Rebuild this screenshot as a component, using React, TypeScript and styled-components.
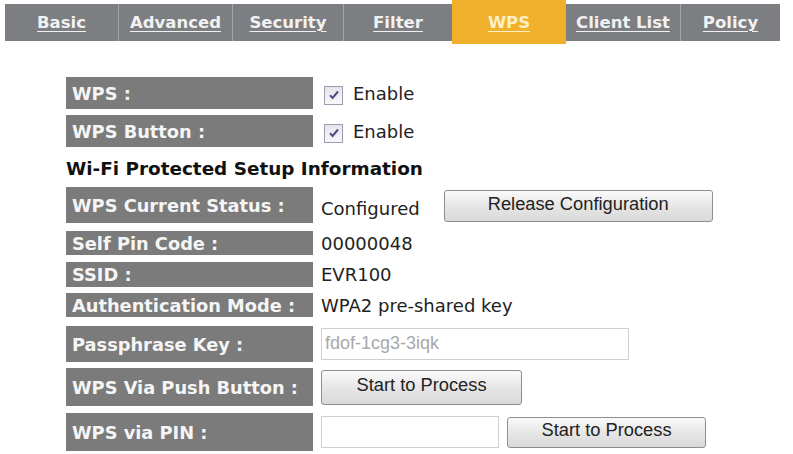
import React from "react";
import styled, { createGlobalStyle } from "styled-components";

const Global = createGlobalStyle`
  html, body { margin: 0; padding: 0; background: #ffffff; }
  body { width: 793px; height: 454px; overflow: hidden; font-family: "DejaVu Sans", Verdana, sans-serif; }
`;

const Page = styled.div`
  width: 793px;
  height: 454px;
  background: #fff;
  display: flex;
  flex-direction: column;
`;

const TabBar = styled.nav`
  margin: 4px 0 0 5px;
  width: 775px;
  height: 37px;
  background: #7c7e81;
  display: flex;
  align-items: stretch;
`;

const Tab = styled.a<{ $w: number; $active?: boolean; $first?: boolean }>`
  width: ${(p) => p.$w}px;
  flex: none;
  display: flex;
  align-items: center;
  justify-content: center;
  font-family: "DejaVu Sans", Verdana, sans-serif;
  font-weight: bold;
  font-size: 16.5px;
  color: ${(p) => (p.$active ? "#fcefc4" : "#f1f1f1")};
  text-decoration: underline;
  text-underline-offset: 3px;
  text-decoration-thickness: 1px;
  background: ${(p) => (p.$active ? "#f0b02c" : "transparent")};
  margin: ${(p) => (p.$active ? "-4px 0 -3px" : "0")};
  padding-top: ${(p) => (p.$active ? "1px" : "0")};
  border-left: ${(p) => (p.$first || p.$active ? "none" : "1px solid #a2a4a6")};
  box-sizing: border-box;
`;

const Form = styled.div`
  margin: 36px 0 0 66px;
  display: flex;
  flex-direction: column;
`;

const Row = styled.div<{ $h: number; $gap: number }>`
  display: flex;
  align-items: stretch;
  height: ${(p) => p.$h}px;
  margin-top: ${(p) => p.$gap}px;
`;

const Label = styled.div`
  width: 247px;
  flex: none;
  background: #7b7b7b;
  color: #f5f5f5;
  font-family: "DejaVu Sans", Verdana, sans-serif;
  font-weight: bold;
  font-size: 17.8px;
  display: flex;
  align-items: center;
  padding-left: 6px;
  box-sizing: border-box;
  white-space: nowrap;
`;

const Value = styled.div`
  display: flex;
  align-items: center;
  padding-left: 8px;
  gap: 8px;
  font-family: "DejaVu Sans", Verdana, sans-serif;
  font-size: 18px;
  color: #222;
  white-space: nowrap;
`;

const CheckBox = styled.span`
  width: 17px;
  height: 17px;
  border: 1px solid #9c9cae;
  background: linear-gradient(#e4e4ec, #f8f8fb);
  display: inline-flex;
  align-items: center;
  justify-content: center;
  margin: 4px 2px 0 3px;
`;

const Heading = styled.div`
  height: 40px;
  display: flex;
  align-items: center;
  font-family: "DejaVu Sans", Verdana, sans-serif;
  font-weight: bold;
  font-size: 18.4px;
  color: #111;
  padding-top: 2px;
  box-sizing: border-box;
  white-space: nowrap;
`;

const StatusText = styled.span`
  margin-top: 6px;
`;

const Button = styled.button<{ $w: number; $h: number; $ml?: number; $mt?: number }>`
  width: ${(p) => p.$w}px;
  height: ${(p) => p.$h}px;
  margin-left: ${(p) => p.$ml ?? 0}px;
  margin-top: ${(p) => p.$mt ?? 0}px;
  border: 1px solid #8e8e8e;
  border-radius: 3px;
  background: linear-gradient(#fbfbfb, #e6e6e6 50%, #d9d9d9);
  font-family: "Liberation Sans", Arial, sans-serif;
  font-size: 18.3px;
  color: #222;
  padding: 0 0 4px;
  flex: none;
`;

const TextInput = styled.input<{ $w: number; $h: number }>`
  width: ${(p) => p.$w}px;
  height: ${(p) => p.$h}px;
  box-sizing: border-box;
  border: 1px solid #cfcfcf;
  background: #fff;
  font-family: "Liberation Sans", Arial, sans-serif;
  font-size: 18px;
  color: #a8a8a8;
  padding: 0 0 2px 3px;
  flex: none;
  outline: none;
`;

const Check = () => (
  <CheckBox>
    <svg width="12" height="12" viewBox="0 0 12 12">
      <path d="M2 6.2 L4.6 9 L10 2.5" fill="none" stroke="#4b4b86" strokeWidth="2" />
    </svg>
  </CheckBox>
);

const tabs: { name: string; w: number }[] = [
  { name: "Basic", w: 113 },
  { name: "Advanced", w: 114 },
  { name: "Security", w: 111 },
  { name: "Filter", w: 109 },
  { name: "WPS", w: 114 },
  { name: "Client List", w: 114 },
  { name: "Policy", w: 100 },
];

export default function App() {
  return (
    <Page>
      <Global />
      <TabBar>
        {tabs.map((t, i) => (
          <Tab key={t.name} $w={t.w} $active={t.name === "WPS"} $first={i === 0 || tabs[i - 1].name === "WPS"}>
            {t.name}
          </Tab>
        ))}
      </TabBar>
      <Form>
        <Row $h={32} $gap={0}>
          <Label>WPS :</Label>
          <Value>
            <Check />
            Enable
          </Value>
        </Row>
        <Row $h={32} $gap={6}>
          <Label>WPS Button :</Label>
          <Value>
            <Check />
            Enable
          </Value>
        </Row>
        <Heading>Wi-Fi Protected Setup Information</Heading>
        <Row $h={36} $gap={0}>
          <Label>WPS Current Status :</Label>
          <Value>
            <StatusText>Configured</StatusText>
            <Button $w={269} $h={32} $ml={16} $mt={2}>
              Release Configuration
            </Button>
          </Value>
        </Row>
        <Row $h={24} $gap={8}>
          <Label>Self Pin Code :</Label>
          <Value>00000048</Value>
        </Row>
        <Row $h={25} $gap={7}>
          <Label>SSID :</Label>
          <Value>EVR100</Value>
        </Row>
        <Row $h={24} $gap={6}>
          <Label>Authentication Mode :</Label>
          <Value>WPA2 pre-shared key</Value>
        </Row>
        <Row $h={36} $gap={9}>
          <Label>Passphrase Key :</Label>
          <Value>
            <TextInput $w={308} $h={32} defaultValue="fdof-1cg3-3iqk" readOnly />
          </Value>
        </Row>
        <Row $h={38} $gap={6}>
          <Label>WPS Via Push Button :</Label>
          <Value>
            <Button $w={201} $h={35}>Start to Process</Button>
          </Value>
        </Row>
        <Row $h={38} $gap={7}>
          <Label>WPS via PIN :</Label>
          <Value>
            <TextInput $w={178} $h={32} />
            <Button $w={199} $h={31}>Start to Process</Button>
          </Value>
        </Row>
      </Form>
    </Page>
  );
}
